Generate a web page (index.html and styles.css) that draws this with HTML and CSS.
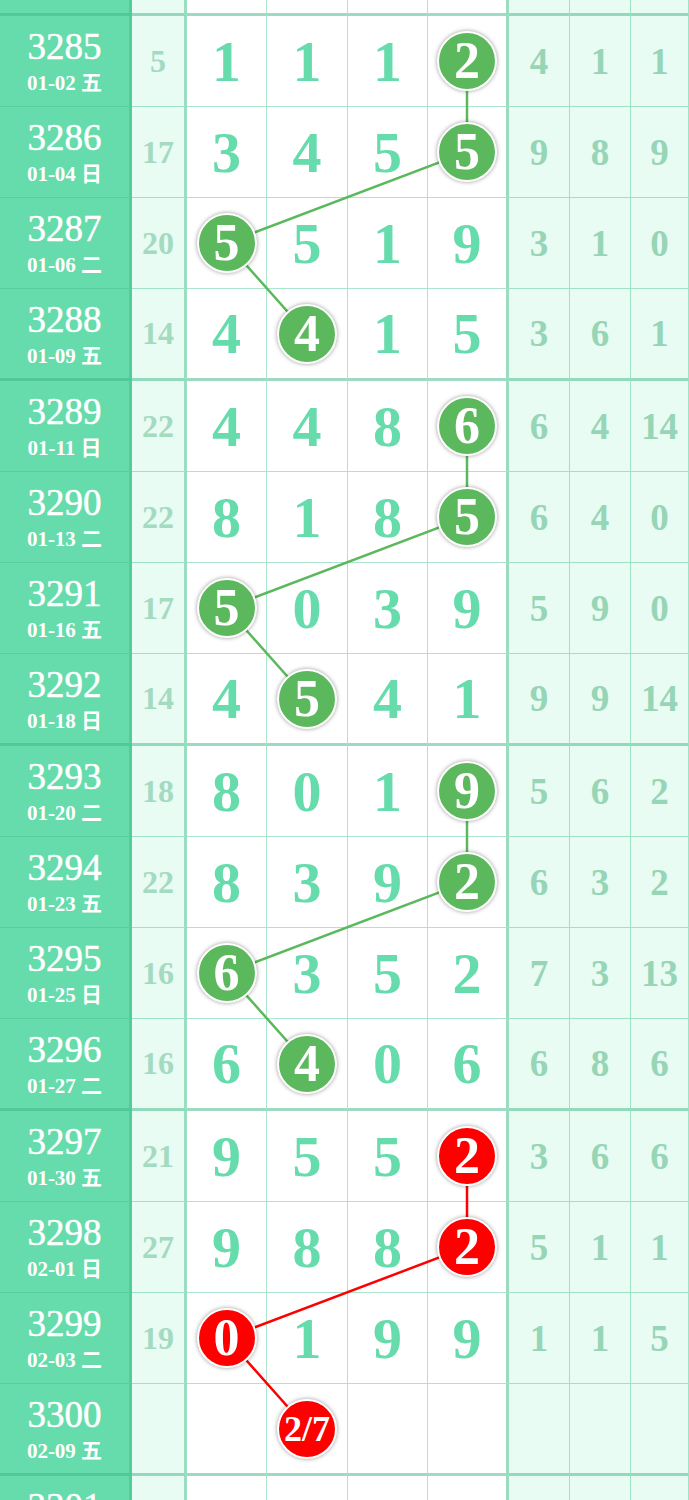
FILE: index.html
```html
<!DOCTYPE html>
<html lang="zh-CN">
<head>
  <meta charset="UTF-8" />
  <meta name="viewport" content="width=device-width, initial-scale=1.0"/>
  <title>走势图</title>
  <link rel="stylesheet" href="styles.css">
</head>
<body>

  <div class="chart">
    <!-- lines joining the balls of each 4-row group -->
    <svg class="links" width="689" height="1600" viewBox="0 0 689 1600">
      <polyline class="link-green" points="467,61 467,152 226.5,243 307,333.5" />
      <polyline class="link-green" points="467,426 467,517 226.5,608 307,698.5" />
      <polyline class="link-green" points="467,791 467,882 226.5,973 307,1063.5" />
      <polyline class="link-red" points="467,1156 467,1247 226.5,1338 307,1428.5" />
    </svg>

    <div class="row row-top">
      <div class="cell issue"></div><div class="cell sum"></div>
      <div class="cell num"></div><div class="cell num"></div><div class="cell num"></div><div class="cell num last"></div>
      <div class="cell span"></div><div class="cell span"></div><div class="cell span"></div>
    </div>

    <div class="row">
      <div class="cell issue"><span class="no">3285</span><span class="date">01-02 五</span></div>
      <div class="cell sum">5</div>
      <div class="cell num">1</div><div class="cell num">1</div><div class="cell num">1</div>
      <div class="cell num last"><span class="ball">2</span></div>
      <div class="cell span">4</div><div class="cell span">1</div><div class="cell span">1</div>
    </div>
    <div class="row">
      <div class="cell issue"><span class="no">3286</span><span class="date">01-04 日</span></div>
      <div class="cell sum">17</div>
      <div class="cell num">3</div><div class="cell num">4</div><div class="cell num">5</div>
      <div class="cell num last"><span class="ball">5</span></div>
      <div class="cell span">9</div><div class="cell span">8</div><div class="cell span">9</div>
    </div>
    <div class="row">
      <div class="cell issue"><span class="no">3287</span><span class="date">01-06 二</span></div>
      <div class="cell sum">20</div>
      <div class="cell num"><span class="ball">5</span></div>
      <div class="cell num">5</div><div class="cell num">1</div><div class="cell num last">9</div>
      <div class="cell span">3</div><div class="cell span">1</div><div class="cell span">0</div>
    </div>
    <div class="row end">
      <div class="cell issue"><span class="no">3288</span><span class="date">01-09 五</span></div>
      <div class="cell sum">14</div>
      <div class="cell num">4</div>
      <div class="cell num"><span class="ball">4</span></div>
      <div class="cell num">1</div><div class="cell num last">5</div>
      <div class="cell span">3</div><div class="cell span">6</div><div class="cell span">1</div>
    </div>

    <div class="row">
      <div class="cell issue"><span class="no">3289</span><span class="date">01-11 日</span></div>
      <div class="cell sum">22</div>
      <div class="cell num">4</div><div class="cell num">4</div><div class="cell num">8</div>
      <div class="cell num last"><span class="ball">6</span></div>
      <div class="cell span">6</div><div class="cell span">4</div><div class="cell span">14</div>
    </div>
    <div class="row">
      <div class="cell issue"><span class="no">3290</span><span class="date">01-13 二</span></div>
      <div class="cell sum">22</div>
      <div class="cell num">8</div><div class="cell num">1</div><div class="cell num">8</div>
      <div class="cell num last"><span class="ball">5</span></div>
      <div class="cell span">6</div><div class="cell span">4</div><div class="cell span">0</div>
    </div>
    <div class="row">
      <div class="cell issue"><span class="no">3291</span><span class="date">01-16 五</span></div>
      <div class="cell sum">17</div>
      <div class="cell num"><span class="ball">5</span></div>
      <div class="cell num">0</div><div class="cell num">3</div><div class="cell num last">9</div>
      <div class="cell span">5</div><div class="cell span">9</div><div class="cell span">0</div>
    </div>
    <div class="row end">
      <div class="cell issue"><span class="no">3292</span><span class="date">01-18 日</span></div>
      <div class="cell sum">14</div>
      <div class="cell num">4</div>
      <div class="cell num"><span class="ball">5</span></div>
      <div class="cell num">4</div><div class="cell num last">1</div>
      <div class="cell span">9</div><div class="cell span">9</div><div class="cell span">14</div>
    </div>

    <div class="row">
      <div class="cell issue"><span class="no">3293</span><span class="date">01-20 二</span></div>
      <div class="cell sum">18</div>
      <div class="cell num">8</div><div class="cell num">0</div><div class="cell num">1</div>
      <div class="cell num last"><span class="ball">9</span></div>
      <div class="cell span">5</div><div class="cell span">6</div><div class="cell span">2</div>
    </div>
    <div class="row">
      <div class="cell issue"><span class="no">3294</span><span class="date">01-23 五</span></div>
      <div class="cell sum">22</div>
      <div class="cell num">8</div><div class="cell num">3</div><div class="cell num">9</div>
      <div class="cell num last"><span class="ball">2</span></div>
      <div class="cell span">6</div><div class="cell span">3</div><div class="cell span">2</div>
    </div>
    <div class="row">
      <div class="cell issue"><span class="no">3295</span><span class="date">01-25 日</span></div>
      <div class="cell sum">16</div>
      <div class="cell num"><span class="ball">6</span></div>
      <div class="cell num">3</div><div class="cell num">5</div><div class="cell num last">2</div>
      <div class="cell span">7</div><div class="cell span">3</div><div class="cell span">13</div>
    </div>
    <div class="row end">
      <div class="cell issue"><span class="no">3296</span><span class="date">01-27 二</span></div>
      <div class="cell sum">16</div>
      <div class="cell num">6</div>
      <div class="cell num"><span class="ball">4</span></div>
      <div class="cell num">0</div><div class="cell num last">6</div>
      <div class="cell span">6</div><div class="cell span">8</div><div class="cell span">6</div>
    </div>

    <div class="row">
      <div class="cell issue"><span class="no">3297</span><span class="date">01-30 五</span></div>
      <div class="cell sum">21</div>
      <div class="cell num">9</div><div class="cell num">5</div><div class="cell num">5</div>
      <div class="cell num last"><span class="ball red">2</span></div>
      <div class="cell span">3</div><div class="cell span">6</div><div class="cell span">6</div>
    </div>
    <div class="row">
      <div class="cell issue"><span class="no">3298</span><span class="date">02-01 日</span></div>
      <div class="cell sum">27</div>
      <div class="cell num">9</div><div class="cell num">8</div><div class="cell num">8</div>
      <div class="cell num last"><span class="ball red">2</span></div>
      <div class="cell span">5</div><div class="cell span">1</div><div class="cell span">1</div>
    </div>
    <div class="row">
      <div class="cell issue"><span class="no">3299</span><span class="date">02-03 二</span></div>
      <div class="cell sum">19</div>
      <div class="cell num"><span class="ball red">0</span></div>
      <div class="cell num">1</div><div class="cell num">9</div><div class="cell num last">9</div>
      <div class="cell span">1</div><div class="cell span">1</div><div class="cell span">5</div>
    </div>
    <div class="row end">
      <div class="cell issue"><span class="no">3300</span><span class="date">02-09 五</span></div>
      <div class="cell sum"></div>
      <div class="cell num"></div>
      <div class="cell num"><span class="ball red small">2/7</span></div>
      <div class="cell num"></div><div class="cell num last"></div>
      <div class="cell span"></div><div class="cell span"></div><div class="cell span"></div>
    </div>

    <div class="row">
      <div class="cell issue"><span class="no">3301</span><span class="date">02-11 日</span></div>
      <div class="cell sum"></div>
      <div class="cell num"></div><div class="cell num"></div><div class="cell num"></div><div class="cell num last"></div>
      <div class="cell span"></div><div class="cell span"></div><div class="cell span"></div>
    </div>
  </div>

</body>
</html>
```

FILE: styles.css
```css
body {
  margin: 0;
  padding: 0;
  background-color: #fff;
  font-family: "Liberation Serif", "Noto Sans CJK SC", serif;
}

.chart {
  position: relative;
  width: 689px;
}

.links {
  position: absolute;
  top: 0;
  left: 0;
  z-index: 1;
  pointer-events: none;
}

.links polyline {
  fill: none;
  stroke-width: 2.5;
}

.link-green {
  stroke: #5cb85c;
}

.link-red {
  stroke: #f00;
}

.row {
  display: grid;
  grid-template-columns: 132px 55px 80px 81px 80px 81px 61px 61px 58px;
  grid-template-rows: 1fr;
  height: 91px;
}

.row.end {
  height: 92px;
}

.row.row-top {
  height: 16px;
}

.cell {
  box-sizing: border-box;
  display: flex;
  align-items: center;
  justify-content: center;
  border-right: 1px solid rgba(70, 195, 145, 0.45);
  border-bottom: 1px solid rgba(70, 195, 145, 0.45);
  font-weight: bold;
}

.row.end .cell,
.row.row-top .cell {
  border-bottom: 3px solid rgba(60, 185, 135, 0.5);
}

.issue {
  flex-direction: column;
  background-color: #66dbab;
  color: #fff;
  border-right: 3px solid rgba(40, 150, 105, 0.25);
}

.issue .no {
  font-size: 37px;
  font-weight: normal;
  line-height: 37px;
  -webkit-text-stroke: 0.5px #fff;
}

.issue .date {
  margin-top: 8px;
  font-size: 21px;
  line-height: 21px;
}

.sum {
  background-color: #e8fcf3;
  color: #a3dac0;
  font-size: 32px;
  border-right: 3px solid rgba(60, 185, 135, 0.45);
}

.num {
  background-color: #fff;
  color: #66dbab;
  font-size: 58px;
}

.num.last {
  border-right: 3px solid rgba(60, 185, 135, 0.5);
}

.span {
  background-color: #e8fcf3;
  color: #96d5b6;
  font-size: 37px;
}

.ball {
  position: relative;
  z-index: 2;
  box-sizing: border-box;
  width: 60px;
  height: 60px;
  display: flex;
  align-items: center;
  justify-content: center;
  border: 2.5px solid #fff;
  border-radius: 50%;
  background-color: #5cb85c;
  color: #fff;
  font-size: 52px;
  line-height: 1;
  box-shadow: 0 0 4px rgba(0, 0, 0, 0.4);
}

.ball.red {
  background-color: #f00;
}

.ball.small {
  font-size: 36px;
}
```
